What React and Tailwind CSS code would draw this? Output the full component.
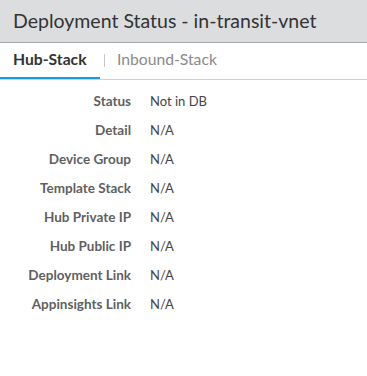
export default function App() {
  const rows = [
    ["Status", "Not in DB"],
    ["Detail", "N/A"],
    ["Device Group", "N/A"],
    ["Template Stack", "N/A"],
    ["Hub Private IP", "N/A"],
    ["Hub Public IP", "N/A"],
    ["Deployment Link", "N/A"],
    ["Appinsights Link", "N/A"],
  ];
  return (
    <div className="w-[367px] h-[376px] bg-white" style={{ fontFamily: "Lato, 'Noto Sans', sans-serif" }}>
      <div className="h-[43px] bg-[#dcdddf] border-b border-[#a8a8a8] flex items-center pl-[13px]">
        <span className="text-[19.5px] text-[#333333] leading-none">Deployment Status - in-transit-vnet</span>
      </div>
      <div className="h-[37px] flex items-stretch border-b border-[#cfcfcf]">
        <div className="w-[100px] flex items-center pl-[13px] border-b-2 border-[#1a9be0] text-[15.7px] font-bold text-[#333333]">Hub-Stack</div>
        <div className="flex items-center pb-[2px]">
          <div className="w-px h-[13px] bg-[#c8c8c8] ml-[4px]"></div>
          <span className="ml-[12px] text-[15.7px] text-[#8a8a8a]">Inbound-Stack</span>
        </div>
      </div>
      <div className="pt-[7px] flex flex-col">
        {rows.map(([k, v]) => (
          <div key={k} className="h-[29px] flex items-center">
            <div className="w-[131px] text-right font-bold text-[13.5px] text-[#5f5f5f]">{k}</div>
            <div className="pl-[19px] text-[13px] text-[#444444]">{v}</div>
          </div>
        ))}
      </div>
    </div>
  );
}
